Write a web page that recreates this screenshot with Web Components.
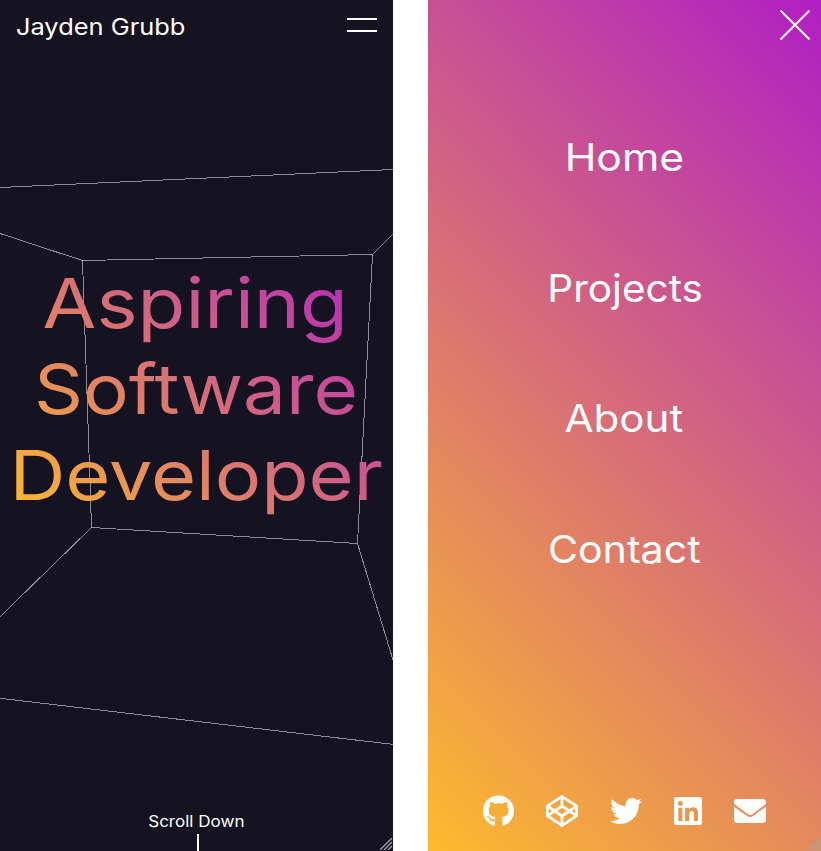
<!DOCTYPE html>
<html lang="en">
<head>
<meta charset="utf-8">
<title>Jayden Grubb</title>
<style>
html,body{margin:0;padding:0;background:#fff;overflow:hidden}
body{font-family:Inter,"Open Sans",sans-serif}
</style>
</head>
<body>
<portfolio-page></portfolio-page>
<script>
const ctx = document.createElement('canvas').getContext('2d');
// Sets x and textLength so the visible ink of a text spans left..left+width.
function fitInk(node, left, width, size) {
  ctx.font = `400 ${size}px Inter, "Open Sans", sans-serif`;
  const m = ctx.measureText(node.textContent);
  const scale = width / (m.actualBoundingBoxLeft + m.actualBoundingBoxRight);
  node.setAttribute('x', left + m.actualBoundingBoxLeft * scale);
  node.setAttribute('textLength', m.width * scale);
  node.setAttribute('lengthAdjust', 'spacingAndGlyphs');
}
function define(name, html, ready) {
  customElements.define(name, class extends HTMLElement {
    constructor() {
      super();
      this.attachShadow({mode: 'open'}).innerHTML = html;
    }
    connectedCallback() { if (ready) ready(this, this.shadowRoot); }
  });
}

define('fit-text', `<style>:host{display:block;color:#fff}svg{display:block;overflow:visible}text{fill:currentColor;font-family:Inter,"Open Sans",sans-serif;font-weight:400}</style><svg><text></text></svg>`, (el, root) => {
  const n = k => Number(el.getAttribute(k));
  const svg = root.querySelector('svg'), t = root.querySelector('text');
  svg.setAttribute('width', n('width'));
  svg.setAttribute('height', n('height'));
  t.textContent = el.getAttribute('label');
  t.setAttribute('font-size', n('size'));
  t.setAttribute('y', n('baseline'));
  fitInk(t, n('shift'), n('width'), n('size'));
});

define('gradient-title', `<style>:host{display:block}svg{display:block}text{font:400 69.3px Inter,"Open Sans",sans-serif;fill:url(#sunset)}</style>
<svg width="393" height="260" role="img">
<defs><linearGradient id="sunset" gradientUnits="userSpaceOnUse" x1="38.7" y1="288.2" x2="355.2" y2="-28.3"><stop stop-color="#fdbb2d"/><stop offset="1" stop-color="#b01fc4"/></linearGradient></defs>
<text y="69" data-l="43.7" data-w="299">Aspiring</text>
<text y="155" data-l="37.3" data-w="318">Software</text>
<text y="241" data-l="16.2" data-w="365.5">Developer</text>
</svg>`, (el, root) => root.querySelectorAll('text').forEach(t => fitInk(t, +t.dataset.l, +t.dataset.w, 69.3)));

define('wire-room', `<style>:host{display:block}svg{display:block}</style>
<svg width="393" height="851" fill="none" stroke="#fff" stroke-opacity=".52" shape-rendering="crispEdges">
<path d="M0 187.5 393 169.5"/><path d="M0 233.5 82.5 260.5"/><path d="M82.5 260.5 372.5 254.5"/><path d="M372.5 254.5 393.5 233.5"/>
<path d="M82.5 260.5 91.5 527.5"/><path d="M372.5 254.5 357.5 543.5"/><path d="M91.5 527.5 357.5 543.5"/><path d="M91.5 527.5 0 616.7"/>
<path d="M357.5 543.5 393 660"/><path d="M0 698.3 393 744.4"/></svg>`);

define('resize-grip', `<style>:host{display:block;width:12px;height:12px}svg{display:block}</style>
<svg width="12" height="12" stroke="#a5a3a8" stroke-width="1.3"><path d="M0 12 12 0M4 12 12 4M8 12 12 8"/></svg>`);

define('menu-button', `<style>:host{display:flex;flex-direction:column;gap:10px;width:30px}i{height:2px;background:#fff}</style><i></i><i></i>`);
define('close-button', `<style>:host{display:block}svg{display:block}</style><svg width="30" height="30" stroke="#fff" stroke-width="2"><path d="M.5.5 29.5 29.5M29.5.5.5 29.5"/></svg>`);

const icons = {
  github: [496, 'M165.9 397.4c0 2-2.3 3.6-5.2 3.6-3.3.3-5.6-1.3-5.6-3.6 0-2 2.3-3.6 5.2-3.6 3-.3 5.6 1.3 5.6 3.6zm-31.1-4.5c-.7 2 1.3 4.3 4.3 4.9 2.6 1 5.6 0 6.2-2s-1.3-4.3-4.3-5.2c-2.6-.7-5.5.3-6.2 2.3zm44.2-1.7c-2.9.7-4.9 2.6-4.6 4.9.3 2 2.9 3.3 5.9 2.6 2.9-.7 4.9-2.6 4.6-4.6-.3-1.9-3-3.2-5.9-2.9zM244.8 8C106.1 8 0 113.3 0 252c0 110.9 69.8 205.8 169.5 239.2 12.8 2.3 17.3-5.6 17.3-12.1 0-6.2-.3-40.4-.3-61.4 0 0-70 15-84.7-29.8 0 0-11.4-29.1-27.8-36.6 0 0-22.9-15.7 1.6-15.4 0 0 24.9 2 38.6 25.8 21.9 38.6 58.6 27.5 72.9 20.9 2.3-16 8.8-27.1 16-33.7-55.9-6.2-112.3-14.3-112.3-110.5 0-27.5 7.6-41.3 23.6-58.9-2.6-6.5-11.1-33.3 2.6-67.9 20.9-6.5 69 27 69 27 20-5.6 41.5-8.5 62.8-8.5s42.8 2.9 62.8 8.5c0 0 48.1-33.6 69-27 13.7 34.7 5.2 61.4 2.6 67.9 16 17.7 25.8 31.5 25.8 58.9 0 96.5-58.9 104.2-114.8 110.5 9.2 7.9 17 22.9 17 46.4 0 33.7-.3 75.4-.3 83.6 0 6.5 4.6 14.4 17.3 12.1C428.2 457.8 496 362.9 496 252 496 113.3 383.5 8 244.8 8zM97.2 352.9c-1.3 1-1 3.3.7 5.2 1.6 1.6 3.9 2.3 5.2 1 1.3-1 1-3.3-.7-5.2-1.6-1.6-3.9-2.3-5.2-1zm-10.8-8.1c-.7 1.3.3 2.9 2.3 3.9 1.6 1 3.6.7 4.3-.7.7-1.3-.3-2.9-2.3-3.9-2-.6-3.6-.3-4.3.7zm32.4 35.6c-1.6 1.3-1 4.3 1.3 6.2 2.3 2.3 5.2 2.6 6.5 1 1.3-1.3.7-4.3-1.3-6.2-2.2-2.3-5.2-2.6-6.5-1zm-11.4-14.7c-1.6 1-1.6 3.6 0 5.9 1.6 2.3 4.3 3.3 5.6 2.3 1.6-1.3 1.6-3.9 0-6.2-1.4-2.3-4-3.3-5.6-2z'],
  codepen: [512, 'M502.285 159.704l-234-156c-7.987-4.915-16.511-4.96-24.571 0l-234 156C3.714 163.703 0 170.847 0 177.989v155.999c0 7.143 3.714 14.286 9.715 18.286l234 156.022c7.987 4.915 16.511 4.96 24.571 0l234-156.022c6-3.999 9.715-11.143 9.715-18.286V177.989c-.001-7.142-3.715-14.286-9.716-18.285zM278 63.131l172.286 114.858-76.857 51.429L278 165.703V63.131zm-44 0v102.572l-95.429 63.715-76.857-51.429L234 63.131zM44 219.132l55.143 36.857L44 292.847v-73.715zm190 229.715L61.714 333.989l76.857-51.429L234 346.275v102.572zm22-140.858l-77.715-52 77.715-52 77.715 52-77.715 52zm22 140.858V346.275l95.429-63.715 76.857 51.429L278 448.847zm190-156l-55.143-36.857L468 219.132v73.715z'],
  twitter: [512, 'M459.37 151.716c.325 4.548.325 9.097.325 13.645 0 138.72-105.583 298.558-298.558 298.558-59.452 0-114.68-17.219-161.137-47.106 8.447.974 16.568 1.299 25.34 1.299 49.055 0 94.213-16.568 130.274-44.832-46.132-.975-84.792-31.188-98.112-72.772 6.498.974 12.995 1.624 19.818 1.624 9.421 0 18.843-1.3 27.614-3.573-48.081-9.747-84.143-51.98-84.143-102.985v-1.299c13.969 7.797 30.214 12.67 47.431 13.319-28.264-18.843-46.781-51.005-46.781-87.391 0-19.492 5.197-37.36 14.294-52.954 51.655 63.675 129.3 105.258 216.365 109.807-1.624-7.797-2.599-15.918-2.599-24.04 0-57.828 46.782-104.934 104.934-104.934 30.213 0 57.502 12.67 76.67 33.137 23.715-4.548 46.456-13.32 66.599-25.34-7.798 24.366-24.366 44.833-46.132 57.827 21.117-2.273 41.584-8.122 60.426-16.243-14.292 20.791-32.161 39.308-52.628 54.253z'],
  linkedin: [448, 'M416 32H31.9C14.3 32 0 46.5 0 64.3v383.4C0 465.5 14.3 480 31.9 480H416c17.6 0 32-14.5 32-32.3V64.3c0-17.8-14.4-32.3-32-32.3zM135.4 416H69V202.2h66.5V416zm-33.2-243c-21.3 0-38.5-17.3-38.5-38.5S80.9 96 102.2 96c21.2 0 38.5 17.3 38.5 38.5 0 21.3-17.2 38.5-38.5 38.5zm282.1 243h-66.4V312c0-24.8-.5-56.7-34.5-56.7-34.6 0-39.9 27-39.9 54.9V416h-66.4V202.2h63.7v29.2h.9c8.9-16.8 30.6-34.5 62.9-34.5 67.2 0 79.7 44.3 79.7 101.9V416z'],
  envelope: [512, 'M502.3 190.8c3.9-3.1 9.7-.2 9.7 4.7V400c0 26.5-21.5 48-48 48H48c-26.5 0-48-21.5-48-48V195.6c0-5 5.7-7.8 9.7-4.7 22.4 17.4 52.1 39.5 154.1 113.6 21.1 15.4 56.7 47.8 92.2 47.6 35.7.3 72-32.8 92.3-47.6 102-74.1 131.6-96.3 154-113.7zM256 320c23.2.4 56.6-29.2 73.4-41.4 132.7-96.3 142.8-104.7 173.4-128.7 5.8-4.5 9.2-11.5 9.2-18.9v-19c0-26.5-21.5-48-48-48H48c-26.5 0-48 21.5-48 48v19c0 7.4 3.4 14.3 9.2 18.9 30.6 23.9 40.7 32.4 173.4 128.7 16.8 12.2 50.2 41.8 73.4 41.4z']
};
define('social-icon', `<style>:host{display:block}svg{display:block;fill:#fff}</style><svg height="32"><path/></svg>`, (el, root) => {
  const [w, d] = icons[el.getAttribute('name')], svg = root.querySelector('svg');
  svg.setAttribute('viewBox', `0 0 ${w} 512`);
  svg.setAttribute('width', w / 16);
  root.querySelector('path').setAttribute('d', d);
});

define('hero-panel', `<style>
:host{display:flex;flex-direction:column;position:relative;height:851px;background:#151221;overflow:hidden}
wire-room{position:absolute;inset:0}
header{display:flex;justify-content:space-between;align-items:flex-start;padding:0 16px 0 17px;height:259px}
menu-button{margin-top:18px}
header,gradient-title,footer{z-index:1}
footer{margin-top:auto;display:flex;flex-direction:column;align-items:center}
.line{width:2px;height:17px;background:#fff;margin-left:3px}
resize-grip{position:absolute;right:1px;bottom:1px}
</style><wire-room></wire-room>
<header><fit-text label="Jayden Grubb" size="23.5" width="168" height="52" baseline="35"></fit-text><menu-button></menu-button></header>
<gradient-title></gradient-title>
<footer><fit-text label="Scroll Down" size="15.5" width="95" height="22" baseline="15" shift="-.8"></fit-text><div class="line"></div></footer><resize-grip></resize-grip>`);

define('nav-panel', `<style>
:host{display:flex;flex-direction:column;position:relative;height:851px;background:linear-gradient(45deg,#fdbb2d,#b01fc4)}
header{display:flex;justify-content:flex-end;padding:10px 11px 0 0;height:83px}
nav{display:flex;flex-direction:column;align-items:center}
footer{margin-top:auto;display:flex;justify-content:center;gap:32px;padding-bottom:24px}
resize-grip{position:absolute;right:1px;bottom:1px}
</style><header><close-button></close-button></header>
<nav>
<fit-text label="Home" size="38.5" width="114.5" height="130.5" baseline="78.4" shift="1"></fit-text>
<fit-text label="Projects" size="38.5" width="151" height="130.5" baseline="78.4" shift="1.5"></fit-text>
<fit-text label="About" size="38.5" width="118" height="130.5" baseline="78.4" shift="-1.5"></fit-text>
<fit-text label="Contact" size="38.5" width="150" height="130.5" baseline="78.4"></fit-text>
</nav>
<footer><social-icon name="github"></social-icon><social-icon name="codepen"></social-icon><social-icon name="twitter"></social-icon><social-icon name="linkedin"></social-icon><social-icon name="envelope"></social-icon></footer><resize-grip></resize-grip>`);

define('portfolio-page', `<style>:host{display:grid;grid-template-columns:393px 393px;column-gap:35px;width:821px;height:851px;background:#fff}</style><hero-panel></hero-panel><nav-panel></nav-panel>`);
</script>
</body>
</html>
